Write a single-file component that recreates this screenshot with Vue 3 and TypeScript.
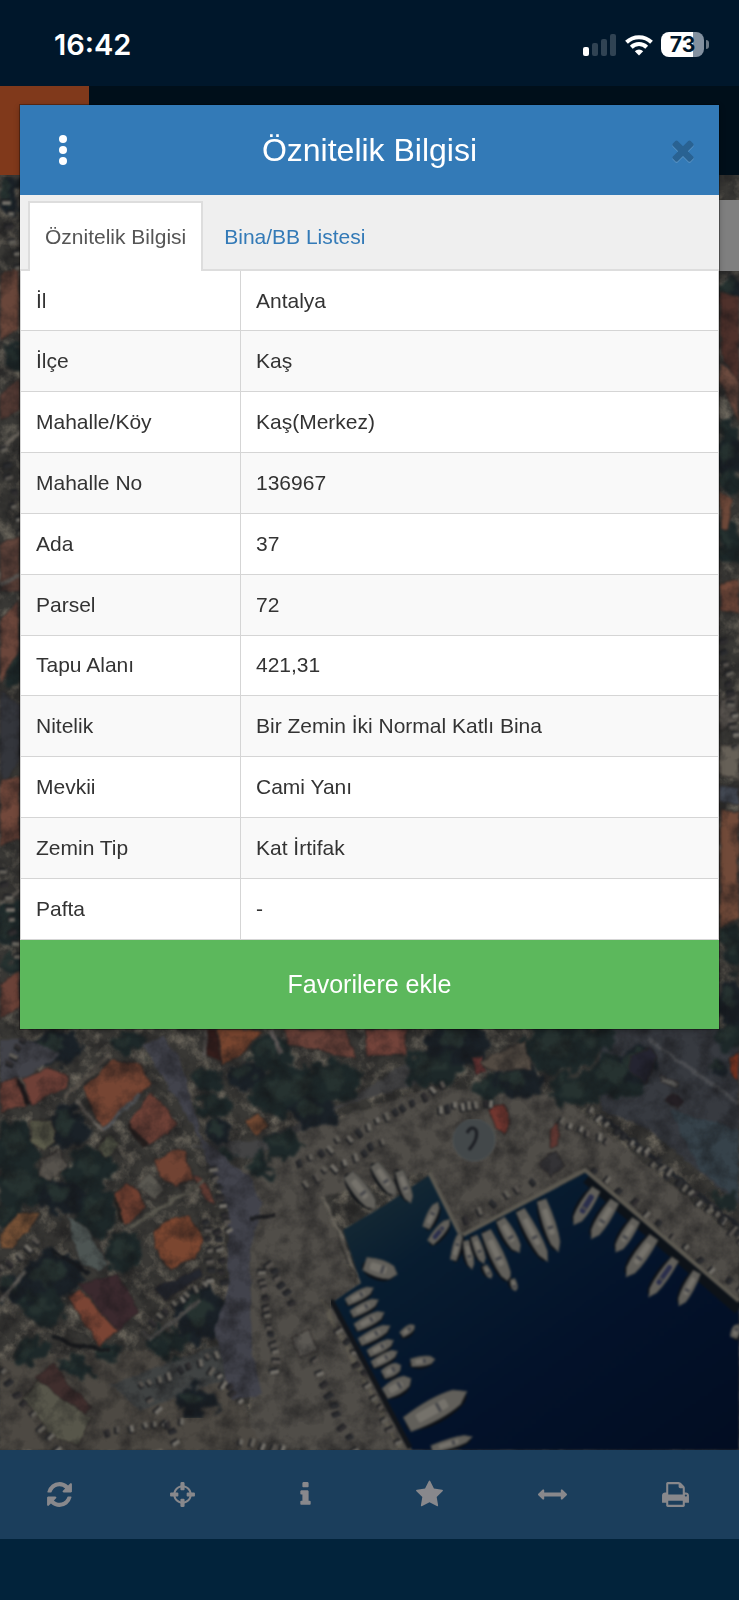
<script setup lang="ts">
import { ref } from 'vue'

interface Row { label: string; value: string }
interface Tool { name: string; path: string }
type Shape = [string, string]
type Boat = [number, number, number, number, number]
type Line = [number, number, number, number, number]

const rows: Row[] = [
  { label: 'İl', value: 'Antalya' },
  { label: 'İlçe', value: 'Kaş' },
  { label: 'Mahalle/Köy', value: 'Kaş(Merkez)' },
  { label: 'Mahalle No', value: '136967' },
  { label: 'Ada', value: '37' },
  { label: 'Parsel', value: '72' },
  { label: 'Tapu Alanı', value: '421,31' },
  { label: 'Nitelik', value: 'Bir Zemin İki Normal Katlı Bina' },
  { label: 'Mevkii', value: 'Cami Yanı' },
  { label: 'Zemin Tip', value: 'Kat İrtifak' },
  { label: 'Pafta', value: '-' },
]

const tabs = ['Öznitelik Bilgisi', 'Bina/BB Listesi']
const active = ref(0)

const tools: Tool[] = [
  { name: 'Yenile', path: 'M1639 1056q0 5-1 7-64 268-268 434.5t-478 166.5q-146 0-282.5-55t-243.5-157l-129 129q-19 19-45 19t-45-19-19-45v-448q0-26 19-45t45-19h448q26 0 45 19t19 45-19 45l-137 137q71 66 161 102t187 36q134 0 250-65t186-179q11-17 53-117 8-23 30-23h192q13 0 22.5 9.5t9.5 22.5zm25-800v448q0 26-19 45t-45 19h-448q-26 0-45-19t-19-45 19-45l138-138q-148-137-349-137-134 0-250 65t-186 179q-11 17-53 117-8 23-30 23h-199q-13 0-22.5-9.5t-9.5-22.5v-7q65-268 270-434.5t480-166.5q146 0 284 55.5t245 156.5l130-129q19-19 45-19t45 19 19 45z' },
  { name: 'Konum', path: 'M1325 1024h-109q-26 0-45-19t-19-45v-128q0-26 19-45t45-19h109q-32-108-112.5-188.5t-188.5-112.5v109q0 26-19 45t-45 19h-128q-26 0-45-19t-19-45v-109q-108 32-188.5 112.5t-112.5 188.5h109q26 0 45 19t19 45v128q0 26-19 45t-45 19h-109q32 108 112.5 188.5t188.5 112.5v-109q0-26 19-45t45-19h128q26 0 45 19t19 45v109q108-32 188.5-112.5t112.5-188.5zm339-192v128q0 26-19 45t-45 19h-143q-37 161-154.5 278.5t-278.5 154.5v143q0 26-19 45t-45 19h-128q-26 0-45-19t-19-45v-143q-161-37-278.5-154.5t-154.5-278.5h-143q-26 0-45-19t-19-45v-128q0-26 19-45t45-19h143q37-161 154.5-278.5t278.5-154.5v-143q0-26 19-45t45-19h128q26 0 45 19t19 45v143q161 37 278.5 154.5t154.5 278.5h143q26 0 45 19t19 45z' },
  { name: 'Bilgi', path: 'M1216 1344v128q0 26-19 45t-45 19h-512q-26 0-45-19t-19-45v-128q0-26 19-45t45-19h64v-384h-64q-26 0-45-19t-19-45v-128q0-26 19-45t45-19h384q26 0 45 19t19 45v576h64q26 0 45 19t19 45zm-128-1152v192q0 26-19 45t-45 19h-256q-26 0-45-19t-19-45v-192q0-26 19-45t45-19h256q26 0 45 19t19 45z' },
  { name: 'Favoriler', path: 'M1728 647q0 22-26 48l-363 354 86 500q1 7 1 20 0 21-10.5 35.5t-30.5 14.5q-19 0-40-12l-449-236-449 236q-22 12-40 12-21 0-31.5-14.5t-10.5-35.5q0-6 2-20l86-500-364-354q-25-27-25-48 0-37 56-46l502-73 225-455q19-41 49-41t49 41l225 455 502 73q56 9 56 46z' },
  { name: 'Ölçüm', path: 'M1792 896q0 26-19 45l-256 256q-19 19-45 19t-45-19-19-45v-128h-1024v128q0 26-19 45t-45 19-45-19l-256-256q-19-19-19-45t19-45l256-256q19-19 45-19t45 19 19 45v128h1024v-128q0-26 19-45t45-19 45 19l256 256q19 19 19 45z' },
  { name: 'Yazdır', path: 'M448 1536h896v-256h-896v256zm0-640h896v-384h-160q-40 0-68-28t-28-68v-160h-640v640zm1152 64q0-26-19-45t-45-19-45 19-19 45 19 45 45 19 45-19 19-45zm128 0v416q0 13-9.5 22.5t-22.5 9.5h-224v160q0 40-28 68t-68 28h-960q-40 0-68-28t-28-68v-160h-224q-13 0-22.5-9.5t-9.5-22.5v-416q0-79 56.5-135.5t135.5-56.5h64v-544q0-40 28-68t68-28h672q40 0 88 20t76 48l152 152q28 28 48 76t20 88v256h64q79 0 135.5 56.5t56.5 135.5z' },
]

const ground: Shape[] = [
  ['240,1170 300,1130 430,1088 560,1095 739,1240 739,1310 585,1170 461,1236 429,1170 322,1197 420,1450 250,1450 250,1250', '#504d48'],
  ['0,1360 130,1350 230,1365 260,1450 0,1450', '#4d4943'],
  ['600,1028 739,1028 739,1205 650,1130 600,1110', '#373a40'],
  ['190,1145 250,1160 345,1105 430,1080 410,1060 350,1100 260,1140', '#434344'],
  ['110,1385 215,1345 235,1350 225,1380 140,1410', '#404343'],
  ['670,1110 739,1130 739,1200 700,1170', '#36424a'],
]

const roads: Shape[] = [
  ['142,1045 162,1036 180,1060 202,1140 250,1178 262,1205 250,1250 252,1350 262,1395 232,1400 214,1330 228,1290 228,1210 196,1130', '#42434c'],
  ['0,1040 30,1040 60,1055 30,1075 0,1085', '#42434a'],
]

const roofs: Shape[] = [
  ['0,1083 17,1078 26,1104 0,1114', '#6d4037'],
  ['22,1078 48,1068 70,1075 68,1088 30,1105', '#6f4037'],
  ['82,1088 113,1060 140,1064 152,1085 102,1128', '#764533'],
  ['128,1122 151,1092 177,1122 170,1133 146,1146', '#6d4036'],
  ['154,1160 176,1150 184,1150 194,1178 176,1187 160,1177', '#714333'],
  ['114,1194 126,1183 138,1190 146,1208 124,1226', '#703f30'],
  ['152,1232 175,1217 188,1216 205,1240 196,1258 170,1270 154,1246', '#7b4630'],
  ['0,1236 18,1212 40,1214 34,1224 12,1248 0,1248', '#755035'],
  ['78,1285 118,1274 140,1312 118,1332', '#3b292e'],
  ['68,1297 80,1290 118,1332 98,1346', '#7a4434'],
  ['192,1173 203,1177 216,1205 206,1200', '#673e35'],
  ['216,1029 248,1029 263,1032 238,1058 222,1064', '#78452f'],
  ['204,1029 216,1029 222,1062 208,1056', '#341d1b'],
  ['283,1029 345,1029 356,1060 318,1050 288,1046', '#6b4239'],
  ['364,1029 407,1029 405,1055 368,1056', '#73433a'],
  ['244,1123 258,1113 270,1125 256,1136', '#704832'],
  ['489,1108 504,1104 511,1125 504,1136 496,1128', '#71362f'],
  ['550,1130 558,1122 558,1145 550,1149', '#5e3631'],
  ['34,1378 55,1363 68,1385 92,1406 82,1418', '#402e2d'],
  ['538,1162 556,1151 566,1165 550,1178', '#343336'],
  ['630,1056 650,1046 657,1056 646,1083 630,1071', '#242431'],
  ['664,1100 672,1093 685,1102 678,1110', '#241f24'],
  ['660,1074 678,1082 675,1088 661,1081', '#5c5b59'],
  ['729,1058 739,1052 739,1082 732,1075', '#7d3420'],
  ['471,1058 482,1056 486,1072 476,1075', '#6b3534'],
  ['480,1062 525,1040 532,1070 490,1070', '#524a42'],
  ['30,1122 54,1120 55,1143 44,1150 30,1141', '#5b5b4a'],
  ['96,1149 109,1133 120,1145 106,1157', '#5a5d4c'],
  ['40,1160 60,1150 66,1165 52,1180 40,1176', '#56524c'],
  ['136,1185 150,1172 165,1190 155,1200', '#5a5851'],
  ['66,1215 88,1228 108,1265 100,1272 80,1265', '#4d5553'],
  ['155,1288 200,1268 203,1275 165,1300', '#24272f'],
  ['290,1338 310,1330 317,1350 300,1358', '#5b5853'],
  ['22,1398 38,1380 90,1418 80,1446 50,1435', '#57564a'],
  // strip west of the dialog
  ['0,275 18,267 20,330 0,340', '#69463a'],
  ['0,394 20,378 20,410 0,420', '#5d4038'],
  ['0,620 19,600 20,650 0,684', '#6b463b'],
  ['0,690 20,705 20,760 0,790', '#34363c'],
  ['0,780 20,776 20,838 0,846', '#72483b'],
  ['0,985 18,972 20,1008 0,1018', '#6b4238'],
  ['0,545 20,535 20,592 0,590', '#61443b'],
  // strip east of the dialog
  ['720,291 739,298 739,388 720,350', '#4f312b'],
  ['722,360 739,382 739,425 720,380', '#6b4a3e'],
  ['720,490 733,500 728,530 720,528', '#6d4839'],
  ['720,585 739,578 739,615 720,610', '#72493a'],
  ['720,700 739,692 739,722 720,730', '#59544f'],
  ['720,745 739,745 739,780 720,775', '#666057'],
  ['720,785 739,788 739,804 720,802', '#474d58'],
  ['720,810 739,812 739,915 720,930', '#714a39'],
]

const lanes: Shape[] = [
  ['64,1098 110,1055', '#5e5850'],
  ['76,1102 104,1132', '#65605a'],
  ['104,1130 140,1094', '#55575a'],
  ['128,1228 205,1180', '#59574e'],
  ['142,1330 150,1340 200,1300', '#4d4c4a'],
  ['18,1080 28,1103', '#1c1719'],
  ['115,1198 122,1224', '#22201e'],
  ['128,1124 146,1146', '#231d1c'],
  ['206,1030 205,1058', '#595552'],
  ['270,1030 282,1054', '#5c5756'],
  ['650,1040 739,1103', '#4b4d51'],
  ['600,1115 739,1227', '#24272c'],
  ['322,1196 361,1282', '#66625a'],
  ['322,1300 400,1448', '#5e5a50'],
  ['0,1300 26,1272', '#625f5a'],
  ['52,1250 90,1275', '#171a1e'],
  ['52,1335 70,1345 110,1350', '#17191c'],
  ['250,1218 274,1216', '#1e1f22'],
  ['0,450 20,432', '#66615a'],
  ['0,585 20,575', '#66615c'],
  ['0,905 20,890', '#66615a'],
]

const trees: Line[] = [
  [55, 1047, 27, 17, 0], [125, 1042, 19, 12, 0], [15, 1145, 22, 26, 0], [65, 1126, 20, 20, 20],
  [88, 1168, 26, 20, 0], [22, 1185, 27, 25, 0], [60, 1195, 23, 18, 0], [95, 1210, 20, 25, 0],
  [8, 1212, 14, 12, 0], [50, 1275, 31, 25, 0], [40, 1305, 22, 20, 0], [122, 1250, 17, 20, 0],
  [202, 1314, 25, 30, 35], [166, 1340, 20, 14, 0], [28, 1350, 17, 14, 0], [195, 1400, 24, 16, 0],
  [105, 1352, 14, 10, 0], [72, 1365, 17, 12, 0], [12, 1290, 14, 12, 0],
  [202, 1078, 14, 13, 0], [212, 1105, 18, 13, 0], [245, 1075, 19, 13, 0], [290, 1090, 42, 25, 0],
  [335, 1080, 25, 22, 0], [310, 1110, 27, 14, 0], [280, 1144, 18, 13, 0], [258, 1163, 12, 13, 0],
  [218, 1131, 13, 13, 0], [222, 1154, 8, 7, 0], [270, 1050, 24, 18, 0],
  [455, 1043, 33, 22, 0], [430, 1068, 28, 17, 0], [555, 1045, 35, 27, 0], [515, 1080, 26, 16, 0],
  [574, 1090, 26, 18, 0], [613, 1075, 33, 21, 0], [635, 1063, 20, 19, 0], [588, 1038, 25, 15, 0],
  [485, 1087, 14, 11, 0], [718, 1067, 7, 9, 0], [732, 1035, 15, 16, 0], [723, 1198, 12, 10, 0],
  [8, 195, 9, 20, 0], [14, 355, 10, 15, 0], [16, 655, 13, 30, 0], [8, 740, 9, 15, 0],
  [8, 925, 16, 23, 0], [14, 965, 12, 10, 0], [728, 455, 15, 18, 0], [728, 540, 15, 23, 0],
  [728, 480, 12, 14, 0], [730, 290, 11, 13, 0], [726, 430, 9, 12, 0], [730, 945, 13, 22, 0], [730, 1000, 16, 25, 0],
]

const boats: Boat[] = [
  [432, 1215, 28, 11, -65], [440, 1231, 30, 11, -50], [457, 1246, 29, 9, -75], [469, 1255, 29, 9, 78],
  [479, 1250, 29, 10, 70], [498, 1257, 56, 15, 65], [510, 1236, 38, 14, 60], [534, 1236, 58, 14, 62],
  [550, 1226, 54, 14, 72], [585, 1207, 42, 14, 122], [603, 1220, 44, 14, 122], [626, 1236, 38, 13, 122],
  [640, 1257, 48, 15, 125], [662, 1278, 46, 12, 125], [688, 1289, 38, 12, 118], [381, 1269, 34, 20, 18],
  [488, 1272, 14, 7, 62], [514, 1285, 12, 7, 75],
  [408, 1330, 16, 9, -36], [423, 1361, 24, 11, -8], [392, 1370, 20, 13, -28], [398, 1386, 30, 17, -30],
  [437, 1408, 68, 24, -29], [452, 1443, 42, 11, -17], [405, 1187, 34, 12, 70], [362, 1192, 44, 17, 52],
  [385, 1180, 38, 14, 56], [736, 1331, 14, 10, -70],
  [360, 1295, 30, 11, -28], [365, 1307, 30, 11, -28], [370, 1320, 32, 12, -28], [375, 1334, 34, 12, -28],
  [381, 1347, 28, 11, -28], [385, 1358, 28, 11, -28],
]

// Parked rows: start, end, number of vehicles
const parking: Line[] = [
  [300, 1160, 440, 1085, 16], [305, 1180, 380, 1140, 9], [590, 1110, 739, 1232, 20],
  [592, 1168, 739, 1290, 12], [465, 1215, 530, 1180, 6], [260, 1270, 275, 1370, 12],
  [268, 1262, 290, 1300, 6], [210, 1170, 228, 1230, 8], [205, 1220, 210, 1280, 7],
  [216, 1230, 222, 1280, 6], [312, 1360, 352, 1448, 9], [340, 1330, 395, 1440, 11],
  [150, 1320, 202, 1282, 8], [140, 1385, 217, 1352, 9], [150, 1400, 176, 1440, 5],
  [210, 1370, 238, 1398, 6], [440, 1107, 490, 1102, 8], [560, 1120, 606, 1140, 6],
  [645, 1150, 739, 1240, 10], [105, 1430, 180, 1420, 7], [0, 1370, 55, 1448, 8],
  [0, 1268, 34, 1240, 5], [240, 1440, 280, 1446, 5], [8, 1060, 22, 1040, 4],
  [3, 450, 18, 530, 7], [722, 640, 736, 745, 11], [3, 870, 16, 955, 8], [4, 200, 15, 265, 6],
]

function seeded(seed: number) {
  let s = seed
  return () => {
    s = (s * 16807) % 2147483647
    return s / 2147483647
  }
}

const rand = seeded(271)
const paint = ['#67645e', '#5f5c56', '#2b2c2f', '#706d67', '#54504c', '#302e30']
const vehicles = parking.flatMap(([x1, y1, x2, y2, n]) =>
  Array.from({ length: n }, (_, i) => {
    const t = i / Math.max(1, n - 1)
    return {
      x: Math.round(x1 + (x2 - x1) * t + rand() * 4),
      y: Math.round(y1 + (y2 - y1) * t + rand() * 4),
      a: Math.round((Math.atan2(y2 - y1, x2 - x1) * 180) / Math.PI + 75 + rand() * 30),
      w: 6 + Math.round(rand() * 3),
      fill: paint[Math.floor(rand() * paint.length)],
    }
  }),
)
</script>

<template>
  <div class="screen">
    <header class="status">
      <span class="clock">16:42</span>
      <span class="signals">
        <svg class="cell" viewBox="0 0 34 22" aria-hidden="true">
          <rect x="0" y="13" width="6" height="9" rx="2" fill="#fff" />
          <rect x="9" y="9" width="6" height="13" rx="2" fill="#304353" />
          <rect x="18" y="5" width="6" height="17" rx="2" fill="#304353" />
          <rect x="27" y="0" width="6" height="22" rx="2" fill="#304353" />
        </svg>
        <svg class="wifi" viewBox="0 0 28 22" aria-hidden="true">
          <g fill="none" stroke="#fff" stroke-width="4">
            <path d="M1.5 8.2a18 18 0 0 1 25 0" />
            <path d="M6.3 13.2a11 11 0 0 1 15.4 0" />
          </g>
          <path d="M14 21.5l-4.2-4.3a6 6 0 0 1 8.4 0z" fill="#fff" />
        </svg>
        <span class="battery"><span class="charge">73</span></span>
      </span>
    </header>

    <div class="navbar"><div class="brand"></div></div>

    <main class="map">
      <svg class="imagery" viewBox="0 175 739 1275" preserveAspectRatio="xMidYMid slice" aria-hidden="true">
        <defs>
          <filter id="rough" x="0" y="0" width="100%" height="100%" color-interpolation-filters="sRGB">
            <feTurbulence type="fractalNoise" baseFrequency="0.07" numOctaves="2" seed="4" result="n" />
            <feDisplacementMap in="SourceGraphic" in2="n" scale="6" xChannelSelector="R" yChannelSelector="G" />
            <feGaussianBlur stdDeviation="0.8" />
          </filter>
          <filter id="canopy" x="0" y="0" width="100%" height="100%" color-interpolation-filters="sRGB">
            <feTurbulence type="fractalNoise" baseFrequency="0.07" numOctaves="3" seed="9" result="n" />
            <feDisplacementMap in="SourceGraphic" in2="n" scale="24" xChannelSelector="R" yChannelSelector="G" />
            <feGaussianBlur stdDeviation="1.5" />
          </filter>
          <filter id="grain" x="0" y="0" width="100%" height="100%" color-interpolation-filters="sRGB">
            <feTurbulence type="fractalNoise" baseFrequency="0.05" numOctaves="4" seed="2" />
            <feColorMatrix type="matrix" values="0 0 0 0 0.07  0 0 0 0 0.07  0 0 0 0 0.08  1.1 0 0 0 -0.42" />
          </filter>
          <filter id="glint" x="0" y="0" width="100%" height="100%" color-interpolation-filters="sRGB">
            <feTurbulence type="fractalNoise" baseFrequency="0.06" numOctaves="4" seed="12" />
            <feColorMatrix type="matrix" values="0 0 0 0 0.42  0 0 0 0 0.4  0 0 0 0 0.36  0 3 0 0 -1.4" />
          </filter>
          <filter id="soft" x="0" y="0" width="100%" height="100%" color-interpolation-filters="sRGB">
            <feGaussianBlur stdDeviation="0.8" />
          </filter>
          <linearGradient id="sea" x1="0" y1="0" x2="1" y2="1">
            <stop offset="0" stop-color="#1d3036" />
            <stop offset="0.25" stop-color="#081d30" />
            <stop offset="0.6" stop-color="#03122a" />
            <stop offset="1" stop-color="#020d22" />
          </linearGradient>
        </defs>

        <rect y="175" width="739" height="1275" fill="#393835" />
        <rect y="175" width="739" height="1275" filter="url(#glint)" />
        <g filter="url(#rough)">
          <polygon v-for="(s, i) in ground" :key="'g' + i" :points="s[0]" :fill="s[1]" />
        </g>
        <g filter="url(#canopy)">
          <ellipse v-for="(t, i) in trees" :key="'t' + i" :cx="t[0] + 2" :cy="t[1] + 2" :rx="t[2]" :ry="t[3]"
            :transform="`rotate(${t[4]} ${t[0]} ${t[1]})`" :fill="i % 3 ? '#1d2829' : '#1a2127'" />
          <ellipse v-for="(t, i) in trees" :key="'l' + i" :cx="t[0] - 2" :cy="t[1] - 2" :rx="t[2] / 2" :ry="t[3] / 2"
            fill="#263230" />
        </g>
        <g filter="url(#rough)">
          <polygon v-for="(s, i) in roads" :key="'d' + i" :points="s[0]" :fill="s[1]" />
          <polygon v-for="(s, i) in roofs" :key="'r' + i" :points="s[0]" :fill="s[1]" stroke="#2b2726" />
          <polyline v-for="(s, i) in lanes" :key="'p' + i" :points="s[0]" :stroke="s[1]" fill="none" stroke-width="4" />
        </g>
        <rect y="175" width="739" height="1275" filter="url(#grain)" />
        <g filter="url(#soft)">
          <g v-for="(v, i) in vehicles" :key="'v' + i" :transform="`translate(${v.x} ${v.y}) rotate(${v.a})`">
            <rect x="-3" y="-1" :width="v.w" height="5" fill="#1e1f22" />
            <rect x="-4" y="-2" :width="v.w" height="4" rx="1" :fill="v.fill" />
          </g>
        </g>

        <g filter="url(#soft)">
          <polygon points="343,1230 385,1205 431,1174 461,1238 587,1172 739,1303 739,1450 412,1450 333,1302 361,1283"
            fill="url(#sea)" />
          <polyline points="587,1178 650,1232 739,1309" fill="none" stroke="#0d1218" stroke-width="12" />
          <polyline points="331,1300 410,1448" fill="none" stroke="#12151a" stroke-width="5" />
          <polyline points="429,1172 461,1236 585,1170 739,1301" fill="none" stroke="#5b5850" stroke-width="4" />
          <circle cx="474" cy="1140" r="21" fill="#43484a" stroke="#4f5455" />
          <path d="M467 1133q4-8 9-3q3 8-7 20" fill="none" stroke="#1d1f24" stroke-width="3" />
          <g v-for="(b, i) in boats" :key="'b' + i" :transform="`translate(${b[0]} ${b[1]}) rotate(${b[4]})`">
            <ellipse cx="-2" cy="2" :rx="b[2] / 2" :ry="b[3] / 2" fill="#0d1015" />
            <path
              :d="`M${-b[2] / 2} ${-b[3] / 3}Q0 ${-b[3] * 0.55} ${b[2] / 3} ${-b[3] / 3}L${b[2] / 2} 0L${b[2] / 3} ${b[3] / 3}Q0 ${b[3] * 0.55} ${-b[2] / 2} ${b[3] / 3}z`"
              fill="#615f5a" stroke="#484845" />
            <rect :x="-b[2] / 3" :y="-b[3] / 5" :width="b[2] / 2" :height="b[3] / 2.5" rx="2"
              :fill="i === 1 || i === 9 || i === 13 ? '#2a2e4c' : '#75726b'" />
            <rect x="0" :y="-b[3] / 5" width="3" :height="b[3] / 2.5" fill="#45464a" />
          </g>
        </g>
      </svg>
      <div class="layer-panel"></div>
    </main>

    <nav class="toolbar" aria-label="Harita araçları">
      <button v-for="t in tools" :key="t.name" type="button" :aria-label="t.name">
        <svg viewBox="0 0 1792 1792" aria-hidden="true"><path :d="t.path" /></svg>
      </button>
    </nav>
    <div class="home-area"></div>

    <section class="dialog" role="dialog" aria-labelledby="dialog-title">
      <header class="dialog-head">
        <button type="button" class="menu" aria-label="Menü">
          <svg viewBox="0 0 10 32" aria-hidden="true">
            <rect x="1" y="1" width="8" height="8" rx="4" />
            <rect x="1" y="12" width="8" height="8" rx="4" />
            <rect x="1" y="23" width="8" height="8" rx="4" />
          </svg>
        </button>
        <h1 id="dialog-title">Öznitelik Bilgisi</h1>
        <button type="button" class="close" aria-label="Kapat">
          <svg viewBox="0 0 1792 1792" aria-hidden="true">
            <path d="M1490 1322q0 40-28 68l-136 136q-28 28-68 28t-68-28l-294-294-294 294q-28 28-68 28t-68-28l-136-136q-28-28-28-68t28-68l294-294-294-294q-28-28-28-68t28-68l136-136q28-28 68-28t68 28l294 294 294-294q28-28 68-28t68 28l136 136q28 28 28 68t-28 68l-294 294 294 294q28 28 28 68z" />
          </svg>
        </button>
      </header>
      <div class="tabs" role="tablist">
        <button v-for="(t, i) in tabs" :key="t" type="button" role="tab" :aria-selected="active === i"
          :class="{ active: active === i }" @click="active = i">{{ t }}</button>
      </div>
      <table>
        <tbody>
          <tr v-for="r in rows" :key="r.label">
            <th scope="row">{{ r.label }}</th>
            <td>{{ r.value }}</td>
          </tr>
        </tbody>
      </table>
      <button type="button" class="favorite">Favorilere ekle</button>
    </section>
  </div>
</template>

<style>
body {
  margin: 0;
  background: #02233b;
}
</style>

<style scoped>
.screen {
  position: relative;
  display: flex;
  flex-direction: column;
  min-height: 100vh;
  font-family: "Liberation Sans", Arial, sans-serif;
  font-size: 21px;
  color: #333;
}
button {
  margin: 0;
  padding: 0;
  border: 0;
  background: none;
  font: inherit;
  color: inherit;
  cursor: pointer;
}
.status {
  display: flex;
  align-items: center;
  justify-content: space-between;
  box-sizing: border-box;
  height: 86px;
  padding: 3px 30px 0 54px;
  background: #00172b;
}
.clock {
  font-family: Inter, sans-serif;
  font-size: 29px;
  font-weight: 600;
  color: #fff;
}
.signals {
  display: flex;
  align-items: center;
  gap: 8px;
}
.cell {
  width: 34px;
  height: 22px;
}
.wifi {
  width: 28px;
  height: 22px;
}
.battery {
  position: relative;
  width: 43px;
  height: 25px;
  margin-right: 5px;
  border-radius: 8px;
  background: linear-gradient(to right, #fff 74%, #8391a0 74%);
}
.battery::after {
  content: "";
  position: absolute;
  top: 8px;
  right: -5px;
  width: 3px;
  height: 9px;
  border-radius: 0 4px 4px 0;
  background: #6b7986;
}
.charge {
  display: block;
  text-align: center;
  font: 700 21px/25px Inter, sans-serif;
  color: #00172b;
}
.navbar {
  height: 89px;
  background: #000f1a;
}
.brand {
  width: 89px;
  height: 89px;
  background: #80391b;
}
.map {
  position: relative;
  flex: 1;
  min-height: 900px;
  overflow: hidden;
}
.imagery {
  position: absolute;
  inset: 0;
  width: 100%;
  height: 100%;
}
.layer-panel {
  position: absolute;
  top: 25px;
  right: 0;
  width: 89px;
  height: 71px;
  background: #7f7f7f;
}
.toolbar {
  display: grid;
  grid-template-columns: repeat(6, 1fr);
  height: 89px;
  background: #1b3e5c;
}
.toolbar button {
  display: flex;
  align-items: center;
  justify-content: center;
  padding-right: 4px;
}
.toolbar svg {
  width: 29px;
  height: 29px;
  fill: #88888c;
}
.home-area {
  height: 61px;
  background: #02233b;
}
.dialog {
  position: absolute;
  top: 105px;
  left: 20px;
  right: 20px;
  background: #fff;
  box-shadow: 0 0 0 1px rgba(0, 0, 0, 0.3), 0 2px 6px rgba(0, 0, 0, 0.3);
}
.dialog-head {
  display: grid;
  grid-template-columns: 86px 1fr 86px;
  align-items: center;
  height: 90px;
  background: #337ab7;
  color: #fff;
}
.dialog-head button {
  display: flex;
  align-items: center;
  justify-content: center;
  height: 90px;
}
.dialog-head .close {
  padding-left: 14px;
}
.menu svg {
  width: 10px;
  height: 32px;
  fill: #fff;
}
.close svg {
  width: 32px;
  height: 32px;
  fill: #296292;
  filter: drop-shadow(0 1px 0 #5c95c5);
}
h1 {
  margin: 0;
  font-size: 32px;
  font-weight: 400;
  line-height: 40px;
  text-align: center;
}
.tabs {
  display: flex;
  align-items: flex-end;
  height: 74px;
  padding-left: 8px;
  border-bottom: 2px solid #ddd;
  background: #efefef;
}
.tabs button {
  height: 70px;
  margin-bottom: -2px;
  padding: 0 15px;
  border: 2px solid transparent;
  border-bottom: 0;
  color: #337ab7;
}
.tabs button + button {
  margin-left: 4px;
}
.tabs .active {
  border-color: #ddd;
  background: #fff;
  color: #555;
}
table {
  width: 100%;
  height: 669px;
  border: 1px solid #ddd;
  border-top: 0;
  border-collapse: collapse;
}
th,
td {
  padding: 0 15px;
  border: 1px solid #d5d5d5;
  text-align: left;
  font-weight: 400;
}
tr:first-child > * {
  border-top: 0;
}
th {
  width: 189px;
}
tr:nth-child(even) {
  background: #f9f9f9;
}
.favorite {
  display: block;
  width: 100%;
  height: 89px;
  background: #5cb85c;
  color: #fff;
  font-size: 25px;
}
</style>
